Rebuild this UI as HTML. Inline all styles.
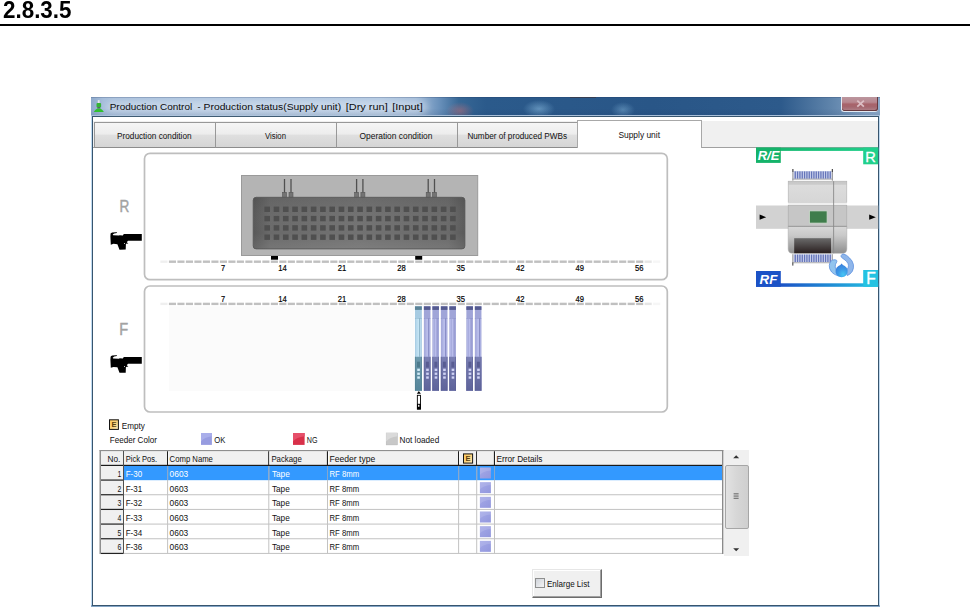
<!DOCTYPE html>
<html><head><meta charset="utf-8"><title>2.8.3.5</title>
<style>
html,body{margin:0;padding:0;background:#fff;}
body{width:970px;height:607px;position:relative;overflow:hidden;font-family:"Liberation Sans","DejaVu Sans",sans-serif;}
.abs{position:absolute;}
#hdr{left:3px;top:-1.8px;font-weight:bold;font-size:22.4px;color:#000;line-height:26px;transform:scaleY(1.04);transform-origin:0 50%;}
#rule{left:0;top:24.3px;width:970px;height:2px;background:#000;}
#tbar{left:91px;top:97px;width:789px;height:19px;background:
 radial-gradient(ellipse 14px 9px at 369px 14px,rgba(190,110,120,.55),rgba(190,110,120,0) 100%),
 radial-gradient(ellipse 16px 9px at 448px 12px,rgba(150,200,235,.5),rgba(150,200,235,0) 100%),
 radial-gradient(ellipse 12px 8px at 532px 13px,rgba(150,200,235,.4),rgba(150,200,235,0) 100%),
 linear-gradient(90deg,#8ea9cb 0px,#a6bedb 12px,#b0c6e0 110px,#b2c8e1 290px,#a3bcd9 325px,#6a91bb 348px,#376795 368px,#2b5a8b 395px,#295687 560px,#2d5a8b 690px,#5f84ab 740px,#86a4c6 775px,#8dabcb 789px);}
#tbar:after{content:"";position:absolute;left:0;top:0;width:100%;height:100%;background:linear-gradient(rgba(30,50,90,.35) 0,rgba(30,50,90,0) 1.5px,rgba(255,255,255,0) 60%,rgba(20,40,80,.12) 100%);}
.tab{position:absolute;top:122px;height:26px;box-sizing:border-box;border:1px solid #989898;border-bottom:1px solid #8c8c8c;background:linear-gradient(#f6f6f6,#ededed 45%,#dfdfdf 52%,#d5d5d5);}
.tab.sel{top:120px;height:28px;border-color:#a8a8a8;background:#fff;border-bottom:none;}
</style></head><body>
<div id="hdr" class="abs">2.8.3.5</div>
<div id="rule" class="abs"></div>
<div id="tbar" class="abs"></div>
<!-- window frame -->
<div class="abs" style="left:91px;top:115.2px;width:789px;height:491.8px;background:#bfdaf1"></div>
<div class="abs" style="left:91px;top:605px;width:789px;height:2px;background:#84a5c6"></div>
<div class="abs" style="left:91px;top:115.2px;width:789px;height:1px;background:#a9c0da"></div>
<div class="abs" style="left:92px;top:116px;width:787px;height:489.8px;background:#38556e"></div>
<div class="abs" style="left:93px;top:117px;width:785px;height:487.8px;background:#fff"></div>
<div class="abs" style="left:93px;top:120.5px;width:785px;height:27.5px;background:#f0f0f0;border-bottom:1px solid #a0a0a0;box-sizing:border-box"></div>
<div class="tab" style="left:94.0px;width:122.0px"></div>
<div class="tab" style="left:215.0px;width:122.0px"></div>
<div class="tab" style="left:336.0px;width:122.0px"></div>
<div class="tab" style="left:457.0px;width:121.0px"></div>
<div class="tab sel" style="left:577px;width:125px"></div>

<!-- scrollbar -->
<div class="abs" style="left:724px;top:450px;width:25px;height:105.6px;background:#f0f0f0"></div>
<div class="abs" style="left:724.6px;top:464.6px;width:24.2px;height:64.4px;box-sizing:border-box;border:1px solid #a6a6a6;border-radius:2px;background:linear-gradient(90deg,#e2e2e2,#d6d6d6 50%,#cfcfcf)"></div>
<!-- button -->
<div class="abs" style="left:532.2px;top:569px;width:69.8px;height:29px;box-sizing:border-box;background:#f0f0f0;border:1px solid;border-color:#e6e6e6 #6c6c6c #6c6c6c #e6e6e6;box-shadow:inset -1px -1px 0 #a0a0a0, inset 1px 1px 0 #fff"></div>
<div class="abs" style="left:535.1px;top:578.2px;width:9.6px;height:9.4px;box-sizing:border-box;border:1px solid #8e8f8f;background:linear-gradient(135deg,#cfd3da,#f4f4f4)"></div>
<svg class="abs" style="left:0;top:0" width="970" height="607" viewBox="0 0 970 607" font-family="Liberation Sans, sans-serif">
<defs>
<linearGradient id="gbody" x1="0" y1="0" x2="1" y2="0"><stop offset="0" stop-color="#585858"/><stop offset="0.08" stop-color="#6a6a6a"/><stop offset="0.5" stop-color="#727272"/><stop offset="0.92" stop-color="#6a6a6a"/><stop offset="1" stop-color="#5a5a5a"/></linearGradient>
<linearGradient id="gbodyv" x1="0" y1="0" x2="0" y2="1"><stop offset="0" stop-color="#000" stop-opacity="0.06"/><stop offset="0.7" stop-color="#fff" stop-opacity="0"/><stop offset="1" stop-color="#fff" stop-opacity="0.08"/></linearGradient>
<linearGradient id="gm1" x1="0" y1="0" x2="0" y2="1"><stop offset="0" stop-color="#c6c6c6"/><stop offset="0.14" stop-color="#cbcbcb"/><stop offset="0.2" stop-color="#dcdcdc"/><stop offset="1" stop-color="#d6d6d6"/></linearGradient>
<linearGradient id="gm2" x1="0" y1="0" x2="0" y2="1"><stop offset="0" stop-color="#d8d8d8"/><stop offset="0.35" stop-color="#c8c8c8"/><stop offset="1" stop-color="#8e8e8e"/></linearGradient>
<linearGradient id="gdk" x1="0" y1="0" x2="0" y2="1"><stop offset="0" stop-color="#6a6a6a"/><stop offset="1" stop-color="#2a2020"/></linearGradient>
<linearGradient id="ggr" x1="0" y1="0" x2="1" y2="0"><stop offset="0" stop-color="#14b36a"/><stop offset="1" stop-color="#20d08c"/></linearGradient>
<linearGradient id="gbl" x1="0" y1="0" x2="1" y2="0"><stop offset="0" stop-color="#1b52c6"/><stop offset="0.2" stop-color="#1b52c6"/><stop offset="1" stop-color="#24c2e2"/></linearGradient>
<radialGradient id="gper2" cx="0.62" cy="0.8" r="0.75"><stop offset="0" stop-color="#46c6f4"/><stop offset="0.55" stop-color="#3c98e6"/><stop offset="1" stop-color="#3a80dc"/></radialGradient>
</defs>
<linearGradient id="gE" x1="0" y1="0" x2="1" y2="1"><stop offset="0" stop-color="#fbc75c"/><stop offset="0.6" stop-color="#fcd684"/><stop offset="1" stop-color="#fdeec8"/></linearGradient>
<linearGradient id="gsw" x1="0" y1="0" x2="1" y2="1"><stop offset="0" stop-color="#a4a9e8"/><stop offset="1" stop-color="#9297dd"/></linearGradient>
<filter id="glow" x="-5%" y="-80%" width="110%" height="260%"><feGaussianBlur stdDeviation="3.2"/></filter>
<rect x="106" y="101" width="322" height="12" rx="6" fill="#fff" opacity="0.3" filter="url(#glow)"/>
<text y="109.9" font-size="9.6" fill="#0c0c0c"><tspan x="109.7" textLength="82.5" lengthAdjust="spacingAndGlyphs">Production Control</tspan> <tspan x="197.6" textLength="3.0" lengthAdjust="spacingAndGlyphs">-</tspan> <tspan x="203.6" textLength="137.5" lengthAdjust="spacingAndGlyphs">Production status(Supply unit)</tspan> <tspan x="345.8" textLength="41.9" lengthAdjust="spacingAndGlyphs">[Dry run]</tspan> <tspan x="392.2" textLength="30.5" lengthAdjust="spacingAndGlyphs">[Input]</tspan></text>
<text x="117.0" y="138.9" font-size="8.9" fill="#111" textLength="74.6" lengthAdjust="spacingAndGlyphs" >Production condition</text>
<text x="265.0" y="138.9" font-size="8.9" fill="#111" textLength="21.0" lengthAdjust="spacingAndGlyphs" >Vision</text>
<text x="359.6" y="138.9" font-size="8.9" fill="#111" textLength="72.8" lengthAdjust="spacingAndGlyphs" >Operation condition</text>
<text x="467.4" y="138.9" font-size="8.9" fill="#111" textLength="99.6" lengthAdjust="spacingAndGlyphs" >Number of produced PWBs</text>
<text x="618.4" y="138.3" font-size="8.9" fill="#111" textLength="41.6" lengthAdjust="spacingAndGlyphs" >Supply unit</text>
<rect x="144.5" y="153.3" width="522.8" height="126.4" rx="5.5" fill="#fff" stroke="#bebebe" stroke-width="1.7"/>
<rect x="144.5" y="286" width="522.8" height="126" rx="5.5" fill="#fff" stroke="#bebebe" stroke-width="1.7"/>
<rect x="241.5" y="175.5" width="236.2" height="80" fill="#b4b4b4" stroke="#9a9a9a" stroke-width="1"/>
<rect x="283.85" y="179" width="1.3" height="14" fill="#505050"/>
<rect x="282.5" y="192.3" width="4" height="5" fill="#747474" stroke="#585858" stroke-width="0.6"/>
<rect x="290.35" y="179" width="1.3" height="14" fill="#505050"/>
<rect x="289.0" y="192.3" width="4" height="5" fill="#747474" stroke="#585858" stroke-width="0.6"/>
<rect x="355.95" y="179" width="1.3" height="14" fill="#505050"/>
<rect x="354.6" y="192.3" width="4" height="5" fill="#747474" stroke="#585858" stroke-width="0.6"/>
<rect x="362.25" y="179" width="1.3" height="14" fill="#505050"/>
<rect x="360.9" y="192.3" width="4" height="5" fill="#747474" stroke="#585858" stroke-width="0.6"/>
<rect x="427.55" y="179" width="1.3" height="14" fill="#505050"/>
<rect x="426.2" y="192.3" width="4" height="5" fill="#747474" stroke="#585858" stroke-width="0.6"/>
<rect x="433.85" y="179" width="1.3" height="14" fill="#505050"/>
<rect x="432.5" y="192.3" width="4" height="5" fill="#747474" stroke="#585858" stroke-width="0.6"/>
<rect x="253.2" y="197.3" width="211.7" height="51.6" rx="3" fill="url(#gbody)" stroke="#545454" stroke-width="0.8"/>
<rect x="253.6" y="197.7" width="210.9" height="50.8" rx="3" fill="url(#gbodyv)"/>
<rect x="264.40" y="206.60" width="5.6" height="5.4" fill="#4f4f4f"/>
<rect x="273.69" y="206.60" width="5.6" height="5.4" fill="#4f4f4f"/>
<rect x="282.97" y="206.60" width="5.6" height="5.4" fill="#4f4f4f"/>
<rect x="292.25" y="206.60" width="5.6" height="5.4" fill="#4f4f4f"/>
<rect x="301.54" y="206.60" width="5.6" height="5.4" fill="#4f4f4f"/>
<rect x="310.82" y="206.60" width="5.6" height="5.4" fill="#4f4f4f"/>
<rect x="320.11" y="206.60" width="5.6" height="5.4" fill="#4f4f4f"/>
<rect x="329.39" y="206.60" width="5.6" height="5.4" fill="#4f4f4f"/>
<rect x="338.68" y="206.60" width="5.6" height="5.4" fill="#4f4f4f"/>
<rect x="347.96" y="206.60" width="5.6" height="5.4" fill="#4f4f4f"/>
<rect x="357.25" y="206.60" width="5.6" height="5.4" fill="#4f4f4f"/>
<rect x="366.53" y="206.60" width="5.6" height="5.4" fill="#4f4f4f"/>
<rect x="375.82" y="206.60" width="5.6" height="5.4" fill="#4f4f4f"/>
<rect x="385.10" y="206.60" width="5.6" height="5.4" fill="#4f4f4f"/>
<rect x="394.39" y="206.60" width="5.6" height="5.4" fill="#4f4f4f"/>
<rect x="403.67" y="206.60" width="5.6" height="5.4" fill="#4f4f4f"/>
<rect x="412.96" y="206.60" width="5.6" height="5.4" fill="#4f4f4f"/>
<rect x="422.25" y="206.60" width="5.6" height="5.4" fill="#4f4f4f"/>
<rect x="431.53" y="206.60" width="5.6" height="5.4" fill="#4f4f4f"/>
<rect x="440.81" y="206.60" width="5.6" height="5.4" fill="#4f4f4f"/>
<rect x="450.10" y="206.60" width="5.6" height="5.4" fill="#4f4f4f"/>
<rect x="264.40" y="215.90" width="5.6" height="5.4" fill="#4f4f4f"/>
<rect x="273.69" y="215.90" width="5.6" height="5.4" fill="#4f4f4f"/>
<rect x="282.97" y="215.90" width="5.6" height="5.4" fill="#4f4f4f"/>
<rect x="292.25" y="215.90" width="5.6" height="5.4" fill="#4f4f4f"/>
<rect x="301.54" y="215.90" width="5.6" height="5.4" fill="#4f4f4f"/>
<rect x="310.82" y="215.90" width="5.6" height="5.4" fill="#4f4f4f"/>
<rect x="320.11" y="215.90" width="5.6" height="5.4" fill="#4f4f4f"/>
<rect x="329.39" y="215.90" width="5.6" height="5.4" fill="#4f4f4f"/>
<rect x="338.68" y="215.90" width="5.6" height="5.4" fill="#4f4f4f"/>
<rect x="347.96" y="215.90" width="5.6" height="5.4" fill="#4f4f4f"/>
<rect x="357.25" y="215.90" width="5.6" height="5.4" fill="#4f4f4f"/>
<rect x="366.53" y="215.90" width="5.6" height="5.4" fill="#4f4f4f"/>
<rect x="375.82" y="215.90" width="5.6" height="5.4" fill="#4f4f4f"/>
<rect x="385.10" y="215.90" width="5.6" height="5.4" fill="#4f4f4f"/>
<rect x="394.39" y="215.90" width="5.6" height="5.4" fill="#4f4f4f"/>
<rect x="403.67" y="215.90" width="5.6" height="5.4" fill="#4f4f4f"/>
<rect x="412.96" y="215.90" width="5.6" height="5.4" fill="#4f4f4f"/>
<rect x="422.25" y="215.90" width="5.6" height="5.4" fill="#4f4f4f"/>
<rect x="431.53" y="215.90" width="5.6" height="5.4" fill="#4f4f4f"/>
<rect x="440.81" y="215.90" width="5.6" height="5.4" fill="#4f4f4f"/>
<rect x="450.10" y="215.90" width="5.6" height="5.4" fill="#4f4f4f"/>
<rect x="264.40" y="225.20" width="5.6" height="5.4" fill="#4f4f4f"/>
<rect x="273.69" y="225.20" width="5.6" height="5.4" fill="#4f4f4f"/>
<rect x="282.97" y="225.20" width="5.6" height="5.4" fill="#4f4f4f"/>
<rect x="292.25" y="225.20" width="5.6" height="5.4" fill="#4f4f4f"/>
<rect x="301.54" y="225.20" width="5.6" height="5.4" fill="#4f4f4f"/>
<rect x="310.82" y="225.20" width="5.6" height="5.4" fill="#4f4f4f"/>
<rect x="320.11" y="225.20" width="5.6" height="5.4" fill="#4f4f4f"/>
<rect x="329.39" y="225.20" width="5.6" height="5.4" fill="#4f4f4f"/>
<rect x="338.68" y="225.20" width="5.6" height="5.4" fill="#4f4f4f"/>
<rect x="347.96" y="225.20" width="5.6" height="5.4" fill="#4f4f4f"/>
<rect x="357.25" y="225.20" width="5.6" height="5.4" fill="#4f4f4f"/>
<rect x="366.53" y="225.20" width="5.6" height="5.4" fill="#4f4f4f"/>
<rect x="375.82" y="225.20" width="5.6" height="5.4" fill="#4f4f4f"/>
<rect x="385.10" y="225.20" width="5.6" height="5.4" fill="#4f4f4f"/>
<rect x="394.39" y="225.20" width="5.6" height="5.4" fill="#4f4f4f"/>
<rect x="403.67" y="225.20" width="5.6" height="5.4" fill="#4f4f4f"/>
<rect x="412.96" y="225.20" width="5.6" height="5.4" fill="#4f4f4f"/>
<rect x="422.25" y="225.20" width="5.6" height="5.4" fill="#4f4f4f"/>
<rect x="431.53" y="225.20" width="5.6" height="5.4" fill="#4f4f4f"/>
<rect x="440.81" y="225.20" width="5.6" height="5.4" fill="#4f4f4f"/>
<rect x="450.10" y="225.20" width="5.6" height="5.4" fill="#4f4f4f"/>
<rect x="264.40" y="234.50" width="5.6" height="5.4" fill="#4f4f4f"/>
<rect x="273.69" y="234.50" width="5.6" height="5.4" fill="#4f4f4f"/>
<rect x="282.97" y="234.50" width="5.6" height="5.4" fill="#4f4f4f"/>
<rect x="292.25" y="234.50" width="5.6" height="5.4" fill="#4f4f4f"/>
<rect x="301.54" y="234.50" width="5.6" height="5.4" fill="#4f4f4f"/>
<rect x="310.82" y="234.50" width="5.6" height="5.4" fill="#4f4f4f"/>
<rect x="320.11" y="234.50" width="5.6" height="5.4" fill="#4f4f4f"/>
<rect x="329.39" y="234.50" width="5.6" height="5.4" fill="#4f4f4f"/>
<rect x="338.68" y="234.50" width="5.6" height="5.4" fill="#4f4f4f"/>
<rect x="347.96" y="234.50" width="5.6" height="5.4" fill="#4f4f4f"/>
<rect x="357.25" y="234.50" width="5.6" height="5.4" fill="#4f4f4f"/>
<rect x="366.53" y="234.50" width="5.6" height="5.4" fill="#4f4f4f"/>
<rect x="375.82" y="234.50" width="5.6" height="5.4" fill="#4f4f4f"/>
<rect x="385.10" y="234.50" width="5.6" height="5.4" fill="#4f4f4f"/>
<rect x="394.39" y="234.50" width="5.6" height="5.4" fill="#4f4f4f"/>
<rect x="403.67" y="234.50" width="5.6" height="5.4" fill="#4f4f4f"/>
<rect x="412.96" y="234.50" width="5.6" height="5.4" fill="#4f4f4f"/>
<rect x="422.25" y="234.50" width="5.6" height="5.4" fill="#4f4f4f"/>
<rect x="431.53" y="234.50" width="5.6" height="5.4" fill="#4f4f4f"/>
<rect x="440.81" y="234.50" width="5.6" height="5.4" fill="#4f4f4f"/>
<rect x="450.10" y="234.50" width="5.6" height="5.4" fill="#4f4f4f"/>
<rect x="271" y="256" width="7" height="3.7" fill="#000"/>
<rect x="415.2" y="256" width="7" height="3.7" fill="#000"/>
<rect x="160.41" y="260.5" width="7.1" height="2.4" fill="#c0c0c0" opacity="0.25"/>
<rect x="168.90" y="260.5" width="7.1" height="2.4" fill="#c0c0c0" opacity="1.00"/>
<rect x="177.40" y="260.5" width="7.1" height="2.4" fill="#c0c0c0" opacity="1.00"/>
<rect x="185.89" y="260.5" width="7.1" height="2.4" fill="#c0c0c0" opacity="1.00"/>
<rect x="194.38" y="260.5" width="7.1" height="2.4" fill="#c0c0c0" opacity="1.00"/>
<rect x="202.88" y="260.5" width="7.1" height="2.4" fill="#c0c0c0" opacity="1.00"/>
<rect x="211.38" y="260.5" width="7.1" height="2.4" fill="#c0c0c0" opacity="1.00"/>
<rect x="219.87" y="260.5" width="7.1" height="2.4" fill="#c0c0c0" opacity="1.00"/>
<rect x="228.37" y="260.5" width="7.1" height="2.4" fill="#c0c0c0" opacity="1.00"/>
<rect x="236.86" y="260.5" width="7.1" height="2.4" fill="#c0c0c0" opacity="1.00"/>
<rect x="245.36" y="260.5" width="7.1" height="2.4" fill="#c0c0c0" opacity="1.00"/>
<rect x="253.85" y="260.5" width="7.1" height="2.4" fill="#c0c0c0" opacity="1.00"/>
<rect x="262.35" y="260.5" width="7.1" height="2.4" fill="#c0c0c0" opacity="1.00"/>
<rect x="270.84" y="260.5" width="7.1" height="2.4" fill="#c0c0c0" opacity="1.00"/>
<rect x="279.33" y="260.5" width="7.1" height="2.4" fill="#c0c0c0" opacity="1.00"/>
<rect x="287.83" y="260.5" width="7.1" height="2.4" fill="#c0c0c0" opacity="1.00"/>
<rect x="296.32" y="260.5" width="7.1" height="2.4" fill="#c0c0c0" opacity="1.00"/>
<rect x="304.82" y="260.5" width="7.1" height="2.4" fill="#c0c0c0" opacity="1.00"/>
<rect x="313.31" y="260.5" width="7.1" height="2.4" fill="#c0c0c0" opacity="1.00"/>
<rect x="321.81" y="260.5" width="7.1" height="2.4" fill="#c0c0c0" opacity="1.00"/>
<rect x="330.30" y="260.5" width="7.1" height="2.4" fill="#c0c0c0" opacity="1.00"/>
<rect x="338.80" y="260.5" width="7.1" height="2.4" fill="#c0c0c0" opacity="1.00"/>
<rect x="347.29" y="260.5" width="7.1" height="2.4" fill="#c0c0c0" opacity="1.00"/>
<rect x="355.79" y="260.5" width="7.1" height="2.4" fill="#c0c0c0" opacity="1.00"/>
<rect x="364.28" y="260.5" width="7.1" height="2.4" fill="#c0c0c0" opacity="1.00"/>
<rect x="372.78" y="260.5" width="7.1" height="2.4" fill="#c0c0c0" opacity="1.00"/>
<rect x="381.27" y="260.5" width="7.1" height="2.4" fill="#c0c0c0" opacity="1.00"/>
<rect x="389.77" y="260.5" width="7.1" height="2.4" fill="#c0c0c0" opacity="1.00"/>
<rect x="398.26" y="260.5" width="7.1" height="2.4" fill="#c0c0c0" opacity="1.00"/>
<rect x="406.76" y="260.5" width="7.1" height="2.4" fill="#c0c0c0" opacity="1.00"/>
<rect x="415.25" y="260.5" width="7.1" height="2.4" fill="#c0c0c0" opacity="1.00"/>
<rect x="423.75" y="260.5" width="7.1" height="2.4" fill="#c0c0c0" opacity="1.00"/>
<rect x="432.25" y="260.5" width="7.1" height="2.4" fill="#c0c0c0" opacity="1.00"/>
<rect x="440.74" y="260.5" width="7.1" height="2.4" fill="#c0c0c0" opacity="1.00"/>
<rect x="449.24" y="260.5" width="7.1" height="2.4" fill="#c0c0c0" opacity="1.00"/>
<rect x="457.73" y="260.5" width="7.1" height="2.4" fill="#c0c0c0" opacity="1.00"/>
<rect x="466.23" y="260.5" width="7.1" height="2.4" fill="#c0c0c0" opacity="1.00"/>
<rect x="474.72" y="260.5" width="7.1" height="2.4" fill="#c0c0c0" opacity="1.00"/>
<rect x="483.22" y="260.5" width="7.1" height="2.4" fill="#c0c0c0" opacity="1.00"/>
<rect x="491.71" y="260.5" width="7.1" height="2.4" fill="#c0c0c0" opacity="1.00"/>
<rect x="500.20" y="260.5" width="7.1" height="2.4" fill="#c0c0c0" opacity="1.00"/>
<rect x="508.70" y="260.5" width="7.1" height="2.4" fill="#c0c0c0" opacity="1.00"/>
<rect x="517.19" y="260.5" width="7.1" height="2.4" fill="#c0c0c0" opacity="1.00"/>
<rect x="525.69" y="260.5" width="7.1" height="2.4" fill="#c0c0c0" opacity="1.00"/>
<rect x="534.18" y="260.5" width="7.1" height="2.4" fill="#c0c0c0" opacity="1.00"/>
<rect x="542.68" y="260.5" width="7.1" height="2.4" fill="#c0c0c0" opacity="1.00"/>
<rect x="551.17" y="260.5" width="7.1" height="2.4" fill="#c0c0c0" opacity="1.00"/>
<rect x="559.67" y="260.5" width="7.1" height="2.4" fill="#c0c0c0" opacity="1.00"/>
<rect x="568.16" y="260.5" width="7.1" height="2.4" fill="#c0c0c0" opacity="1.00"/>
<rect x="576.66" y="260.5" width="7.1" height="2.4" fill="#c0c0c0" opacity="1.00"/>
<rect x="585.15" y="260.5" width="7.1" height="2.4" fill="#c0c0c0" opacity="1.00"/>
<rect x="593.65" y="260.5" width="7.1" height="2.4" fill="#c0c0c0" opacity="1.00"/>
<rect x="602.14" y="260.5" width="7.1" height="2.4" fill="#c0c0c0" opacity="1.00"/>
<rect x="610.64" y="260.5" width="7.1" height="2.4" fill="#c0c0c0" opacity="1.00"/>
<rect x="619.13" y="260.5" width="7.1" height="2.4" fill="#c0c0c0" opacity="1.00"/>
<rect x="627.63" y="260.5" width="7.1" height="2.4" fill="#c0c0c0" opacity="1.00"/>
<rect x="636.12" y="260.5" width="7.1" height="2.4" fill="#c0c0c0" opacity="1.00"/>
<rect x="644.62" y="260.5" width="7.1" height="2.4" fill="#c0c0c0" opacity="0.40"/>
<rect x="653.12" y="260.5" width="7.1" height="2.4" fill="#c0c0c0" opacity="0.15"/>
<text x="221.1" y="271.4" font-size="9.4" fill="#000" textLength="4.1" lengthAdjust="spacingAndGlyphs" stroke="#000" stroke-width="0.2">7</text>
<text x="278.3" y="271.4" font-size="9.4" fill="#000" textLength="8.5" lengthAdjust="spacingAndGlyphs" stroke="#000" stroke-width="0.2">14</text>
<text x="337.7" y="271.4" font-size="9.4" fill="#000" textLength="8.5" lengthAdjust="spacingAndGlyphs" stroke="#000" stroke-width="0.2">21</text>
<text x="397.2" y="271.4" font-size="9.4" fill="#000" textLength="8.5" lengthAdjust="spacingAndGlyphs" stroke="#000" stroke-width="0.2">28</text>
<text x="456.6" y="271.4" font-size="9.4" fill="#000" textLength="8.5" lengthAdjust="spacingAndGlyphs" stroke="#000" stroke-width="0.2">35</text>
<text x="516.0" y="271.4" font-size="9.4" fill="#000" textLength="8.5" lengthAdjust="spacingAndGlyphs" stroke="#000" stroke-width="0.2">42</text>
<text x="575.5" y="271.4" font-size="9.4" fill="#000" textLength="8.5" lengthAdjust="spacingAndGlyphs" stroke="#000" stroke-width="0.2">49</text>
<text x="634.9" y="271.4" font-size="9.4" fill="#000" textLength="8.5" lengthAdjust="spacingAndGlyphs" stroke="#000" stroke-width="0.2">56</text>
<rect x="160.41" y="302.7" width="7.1" height="2.4" fill="#c0c0c0" opacity="0.25"/>
<rect x="168.90" y="302.7" width="7.1" height="2.4" fill="#c0c0c0" opacity="1.00"/>
<rect x="177.40" y="302.7" width="7.1" height="2.4" fill="#c0c0c0" opacity="1.00"/>
<rect x="185.89" y="302.7" width="7.1" height="2.4" fill="#c0c0c0" opacity="1.00"/>
<rect x="194.38" y="302.7" width="7.1" height="2.4" fill="#c0c0c0" opacity="1.00"/>
<rect x="202.88" y="302.7" width="7.1" height="2.4" fill="#c0c0c0" opacity="1.00"/>
<rect x="211.38" y="302.7" width="7.1" height="2.4" fill="#c0c0c0" opacity="1.00"/>
<rect x="219.87" y="302.7" width="7.1" height="2.4" fill="#c0c0c0" opacity="1.00"/>
<rect x="228.37" y="302.7" width="7.1" height="2.4" fill="#c0c0c0" opacity="1.00"/>
<rect x="236.86" y="302.7" width="7.1" height="2.4" fill="#c0c0c0" opacity="1.00"/>
<rect x="245.36" y="302.7" width="7.1" height="2.4" fill="#c0c0c0" opacity="1.00"/>
<rect x="253.85" y="302.7" width="7.1" height="2.4" fill="#c0c0c0" opacity="1.00"/>
<rect x="262.35" y="302.7" width="7.1" height="2.4" fill="#c0c0c0" opacity="1.00"/>
<rect x="270.84" y="302.7" width="7.1" height="2.4" fill="#c0c0c0" opacity="1.00"/>
<rect x="279.33" y="302.7" width="7.1" height="2.4" fill="#c0c0c0" opacity="1.00"/>
<rect x="287.83" y="302.7" width="7.1" height="2.4" fill="#c0c0c0" opacity="1.00"/>
<rect x="296.32" y="302.7" width="7.1" height="2.4" fill="#c0c0c0" opacity="1.00"/>
<rect x="304.82" y="302.7" width="7.1" height="2.4" fill="#c0c0c0" opacity="1.00"/>
<rect x="313.31" y="302.7" width="7.1" height="2.4" fill="#c0c0c0" opacity="1.00"/>
<rect x="321.81" y="302.7" width="7.1" height="2.4" fill="#c0c0c0" opacity="1.00"/>
<rect x="330.30" y="302.7" width="7.1" height="2.4" fill="#c0c0c0" opacity="1.00"/>
<rect x="338.80" y="302.7" width="7.1" height="2.4" fill="#c0c0c0" opacity="1.00"/>
<rect x="347.29" y="302.7" width="7.1" height="2.4" fill="#c0c0c0" opacity="1.00"/>
<rect x="355.79" y="302.7" width="7.1" height="2.4" fill="#c0c0c0" opacity="1.00"/>
<rect x="364.28" y="302.7" width="7.1" height="2.4" fill="#c0c0c0" opacity="1.00"/>
<rect x="372.78" y="302.7" width="7.1" height="2.4" fill="#c0c0c0" opacity="1.00"/>
<rect x="381.27" y="302.7" width="7.1" height="2.4" fill="#c0c0c0" opacity="1.00"/>
<rect x="389.77" y="302.7" width="7.1" height="2.4" fill="#c0c0c0" opacity="1.00"/>
<rect x="398.26" y="302.7" width="7.1" height="2.4" fill="#c0c0c0" opacity="1.00"/>
<rect x="406.76" y="302.7" width="7.1" height="2.4" fill="#c0c0c0" opacity="1.00"/>
<rect x="415.25" y="302.7" width="7.1" height="2.4" fill="#c0c0c0" opacity="1.00"/>
<rect x="423.75" y="302.7" width="7.1" height="2.4" fill="#c0c0c0" opacity="1.00"/>
<rect x="432.25" y="302.7" width="7.1" height="2.4" fill="#c0c0c0" opacity="1.00"/>
<rect x="440.74" y="302.7" width="7.1" height="2.4" fill="#c0c0c0" opacity="1.00"/>
<rect x="449.24" y="302.7" width="7.1" height="2.4" fill="#c0c0c0" opacity="1.00"/>
<rect x="457.73" y="302.7" width="7.1" height="2.4" fill="#c0c0c0" opacity="1.00"/>
<rect x="466.23" y="302.7" width="7.1" height="2.4" fill="#c0c0c0" opacity="1.00"/>
<rect x="474.72" y="302.7" width="7.1" height="2.4" fill="#c0c0c0" opacity="1.00"/>
<rect x="483.22" y="302.7" width="7.1" height="2.4" fill="#c0c0c0" opacity="1.00"/>
<rect x="491.71" y="302.7" width="7.1" height="2.4" fill="#c0c0c0" opacity="1.00"/>
<rect x="500.20" y="302.7" width="7.1" height="2.4" fill="#c0c0c0" opacity="1.00"/>
<rect x="508.70" y="302.7" width="7.1" height="2.4" fill="#c0c0c0" opacity="1.00"/>
<rect x="517.19" y="302.7" width="7.1" height="2.4" fill="#c0c0c0" opacity="1.00"/>
<rect x="525.69" y="302.7" width="7.1" height="2.4" fill="#c0c0c0" opacity="1.00"/>
<rect x="534.18" y="302.7" width="7.1" height="2.4" fill="#c0c0c0" opacity="1.00"/>
<rect x="542.68" y="302.7" width="7.1" height="2.4" fill="#c0c0c0" opacity="1.00"/>
<rect x="551.17" y="302.7" width="7.1" height="2.4" fill="#c0c0c0" opacity="1.00"/>
<rect x="559.67" y="302.7" width="7.1" height="2.4" fill="#c0c0c0" opacity="1.00"/>
<rect x="568.16" y="302.7" width="7.1" height="2.4" fill="#c0c0c0" opacity="1.00"/>
<rect x="576.66" y="302.7" width="7.1" height="2.4" fill="#c0c0c0" opacity="1.00"/>
<rect x="585.15" y="302.7" width="7.1" height="2.4" fill="#c0c0c0" opacity="1.00"/>
<rect x="593.65" y="302.7" width="7.1" height="2.4" fill="#c0c0c0" opacity="1.00"/>
<rect x="602.14" y="302.7" width="7.1" height="2.4" fill="#c0c0c0" opacity="1.00"/>
<rect x="610.64" y="302.7" width="7.1" height="2.4" fill="#c0c0c0" opacity="1.00"/>
<rect x="619.13" y="302.7" width="7.1" height="2.4" fill="#c0c0c0" opacity="1.00"/>
<rect x="627.63" y="302.7" width="7.1" height="2.4" fill="#c0c0c0" opacity="1.00"/>
<rect x="636.12" y="302.7" width="7.1" height="2.4" fill="#c0c0c0" opacity="1.00"/>
<rect x="644.62" y="302.7" width="7.1" height="2.4" fill="#c0c0c0" opacity="0.40"/>
<rect x="653.12" y="302.7" width="7.1" height="2.4" fill="#c0c0c0" opacity="0.15"/>
<text x="221.1" y="301.9" font-size="9.4" fill="#000" textLength="4.1" lengthAdjust="spacingAndGlyphs" stroke="#000" stroke-width="0.2">7</text>
<text x="278.3" y="301.9" font-size="9.4" fill="#000" textLength="8.5" lengthAdjust="spacingAndGlyphs" stroke="#000" stroke-width="0.2">14</text>
<text x="337.7" y="301.9" font-size="9.4" fill="#000" textLength="8.5" lengthAdjust="spacingAndGlyphs" stroke="#000" stroke-width="0.2">21</text>
<text x="397.2" y="301.9" font-size="9.4" fill="#000" textLength="8.5" lengthAdjust="spacingAndGlyphs" stroke="#000" stroke-width="0.2">28</text>
<text x="456.6" y="301.9" font-size="9.4" fill="#000" textLength="8.5" lengthAdjust="spacingAndGlyphs" stroke="#000" stroke-width="0.2">35</text>
<text x="516.0" y="301.9" font-size="9.4" fill="#000" textLength="8.5" lengthAdjust="spacingAndGlyphs" stroke="#000" stroke-width="0.2">42</text>
<text x="575.5" y="301.9" font-size="9.4" fill="#000" textLength="8.5" lengthAdjust="spacingAndGlyphs" stroke="#000" stroke-width="0.2">49</text>
<text x="634.9" y="301.9" font-size="9.4" fill="#000" textLength="8.5" lengthAdjust="spacingAndGlyphs" stroke="#000" stroke-width="0.2">56</text>
<rect x="169" y="306.3" width="245" height="84.5" fill="#fbfbfb"/>
<linearGradient id="fg30" x1="0" y1="0" x2="0" y2="1"><stop offset="0" stop-color="#6e9bae"/><stop offset="1" stop-color="#55859a"/></linearGradient>
<rect x="414.95" y="306.3" width="6.9" height="84.5" fill="#a6cbe2"/>
<rect x="414.95" y="306.3" width="6.9" height="3.6" fill="#5a8397"/>
<rect x="415.85" y="318.3" width="5.10" height="38.5" fill="#c4e4f4"/>
<rect x="414.95" y="318" width="6.9" height="0.6" fill="#7fa9c0" opacity="0.7"/>
<rect x="419.25" y="318.3" width="0.9" height="38.5" fill="#7fa9c0"/>
<rect x="416.56" y="318.3" width="0.7" height="38.5" fill="#a6cbe2"/>
<rect x="414.95" y="356.8" width="6.9" height="34" fill="url(#fg30)"/>
<rect x="414.95" y="356.8" width="0.7" height="34" fill="#4d7a8c" opacity="0.7"/>
<rect x="421.15" y="356.8" width="0.7" height="34" fill="#4d7a8c" opacity="0.7"/>
<rect x="416.95" y="361.7" width="3" height="5.8" fill="#4d7a8c"/>
<rect x="417.25" y="368.7" width="2.6" height="2.3" fill="#d2ecf8"/>
<rect x="417.25" y="372.6" width="2.6" height="2.3" fill="#d2ecf8"/>
<rect x="417.25" y="376.4" width="2.6" height="2.3" fill="#d2ecf8"/>
<linearGradient id="fg31" x1="0" y1="0" x2="0" y2="1"><stop offset="0" stop-color="#7b80b4"/><stop offset="1" stop-color="#5e639a"/></linearGradient>
<rect x="423.87" y="306.3" width="6.6" height="84.5" fill="#a0a5d8"/>
<rect x="423.87" y="306.3" width="6.6" height="3.6" fill="#545a90"/>
<rect x="424.77" y="318.3" width="4.80" height="38.5" fill="#b9bdea"/>
<rect x="423.87" y="318" width="6.6" height="0.6" fill="#8287c2" opacity="0.7"/>
<rect x="428.17" y="318.3" width="0.9" height="38.5" fill="#8287c2"/>
<rect x="425.47" y="318.3" width="0.7" height="38.5" fill="#a0a5d8"/>
<rect x="423.87" y="356.8" width="6.6" height="34" fill="url(#fg31)"/>
<rect x="423.87" y="356.8" width="0.7" height="34" fill="#585c92" opacity="0.7"/>
<rect x="429.77" y="356.8" width="0.7" height="34" fill="#585c92" opacity="0.7"/>
<rect x="425.87" y="361.7" width="3" height="5.8" fill="#585c92"/>
<rect x="426.17" y="368.7" width="2.6" height="2.3" fill="#cfd2f4"/>
<rect x="426.17" y="372.6" width="2.6" height="2.3" fill="#cfd2f4"/>
<rect x="426.17" y="376.4" width="2.6" height="2.3" fill="#cfd2f4"/>
<linearGradient id="fg32" x1="0" y1="0" x2="0" y2="1"><stop offset="0" stop-color="#7b80b4"/><stop offset="1" stop-color="#5e639a"/></linearGradient>
<rect x="432.37" y="306.3" width="6.6" height="84.5" fill="#a0a5d8"/>
<rect x="432.37" y="306.3" width="6.6" height="3.6" fill="#545a90"/>
<rect x="433.26" y="318.3" width="4.80" height="38.5" fill="#b9bdea"/>
<rect x="432.37" y="318" width="6.6" height="0.6" fill="#8287c2" opacity="0.7"/>
<rect x="436.67" y="318.3" width="0.9" height="38.5" fill="#8287c2"/>
<rect x="433.97" y="318.3" width="0.7" height="38.5" fill="#a0a5d8"/>
<rect x="432.37" y="356.8" width="6.6" height="34" fill="url(#fg32)"/>
<rect x="432.37" y="356.8" width="0.7" height="34" fill="#585c92" opacity="0.7"/>
<rect x="438.27" y="356.8" width="0.7" height="34" fill="#585c92" opacity="0.7"/>
<rect x="434.37" y="361.7" width="3" height="5.8" fill="#585c92"/>
<rect x="434.67" y="368.7" width="2.6" height="2.3" fill="#cfd2f4"/>
<rect x="434.67" y="372.6" width="2.6" height="2.3" fill="#cfd2f4"/>
<rect x="434.67" y="376.4" width="2.6" height="2.3" fill="#cfd2f4"/>
<linearGradient id="fg33" x1="0" y1="0" x2="0" y2="1"><stop offset="0" stop-color="#7b80b4"/><stop offset="1" stop-color="#5e639a"/></linearGradient>
<rect x="440.86" y="306.3" width="6.6" height="84.5" fill="#a0a5d8"/>
<rect x="440.86" y="306.3" width="6.6" height="3.6" fill="#545a90"/>
<rect x="441.76" y="318.3" width="4.80" height="38.5" fill="#b9bdea"/>
<rect x="440.86" y="318" width="6.6" height="0.6" fill="#8287c2" opacity="0.7"/>
<rect x="445.16" y="318.3" width="0.9" height="38.5" fill="#8287c2"/>
<rect x="442.46" y="318.3" width="0.7" height="38.5" fill="#a0a5d8"/>
<rect x="440.86" y="356.8" width="6.6" height="34" fill="url(#fg33)"/>
<rect x="440.86" y="356.8" width="0.7" height="34" fill="#585c92" opacity="0.7"/>
<rect x="446.76" y="356.8" width="0.7" height="34" fill="#585c92" opacity="0.7"/>
<rect x="442.86" y="361.7" width="3" height="5.8" fill="#585c92"/>
<rect x="443.16" y="368.7" width="2.6" height="2.3" fill="#cfd2f4"/>
<rect x="443.16" y="372.6" width="2.6" height="2.3" fill="#cfd2f4"/>
<rect x="443.16" y="376.4" width="2.6" height="2.3" fill="#cfd2f4"/>
<linearGradient id="fg34" x1="0" y1="0" x2="0" y2="1"><stop offset="0" stop-color="#7b80b4"/><stop offset="1" stop-color="#5e639a"/></linearGradient>
<rect x="449.36" y="306.3" width="6.6" height="84.5" fill="#a0a5d8"/>
<rect x="449.36" y="306.3" width="6.6" height="3.6" fill="#545a90"/>
<rect x="450.25" y="318.3" width="4.80" height="38.5" fill="#b9bdea"/>
<rect x="449.36" y="318" width="6.6" height="0.6" fill="#8287c2" opacity="0.7"/>
<rect x="453.66" y="318.3" width="0.9" height="38.5" fill="#8287c2"/>
<rect x="450.96" y="318.3" width="0.7" height="38.5" fill="#a0a5d8"/>
<rect x="449.36" y="356.8" width="6.6" height="34" fill="url(#fg34)"/>
<rect x="449.36" y="356.8" width="0.7" height="34" fill="#585c92" opacity="0.7"/>
<rect x="455.26" y="356.8" width="0.7" height="34" fill="#585c92" opacity="0.7"/>
<rect x="451.36" y="361.7" width="3" height="5.8" fill="#585c92"/>
<rect x="451.66" y="368.7" width="2.6" height="2.3" fill="#cfd2f4"/>
<rect x="451.66" y="372.6" width="2.6" height="2.3" fill="#cfd2f4"/>
<rect x="451.66" y="376.4" width="2.6" height="2.3" fill="#cfd2f4"/>
<linearGradient id="fg36" x1="0" y1="0" x2="0" y2="1"><stop offset="0" stop-color="#7b80b4"/><stop offset="1" stop-color="#5e639a"/></linearGradient>
<rect x="466.35" y="306.3" width="6.6" height="84.5" fill="#a0a5d8"/>
<rect x="466.35" y="306.3" width="6.6" height="3.6" fill="#545a90"/>
<rect x="467.25" y="318.3" width="4.80" height="38.5" fill="#b9bdea"/>
<rect x="466.35" y="318" width="6.6" height="0.6" fill="#8287c2" opacity="0.7"/>
<rect x="470.65" y="318.3" width="0.9" height="38.5" fill="#8287c2"/>
<rect x="467.95" y="318.3" width="0.7" height="38.5" fill="#a0a5d8"/>
<rect x="466.35" y="356.8" width="6.6" height="34" fill="url(#fg36)"/>
<rect x="466.35" y="356.8" width="0.7" height="34" fill="#585c92" opacity="0.7"/>
<rect x="472.25" y="356.8" width="0.7" height="34" fill="#585c92" opacity="0.7"/>
<rect x="468.35" y="361.7" width="3" height="5.8" fill="#585c92"/>
<rect x="468.65" y="368.7" width="2.6" height="2.3" fill="#cfd2f4"/>
<rect x="468.65" y="372.6" width="2.6" height="2.3" fill="#cfd2f4"/>
<rect x="468.65" y="376.4" width="2.6" height="2.3" fill="#cfd2f4"/>
<linearGradient id="fg37" x1="0" y1="0" x2="0" y2="1"><stop offset="0" stop-color="#7b80b4"/><stop offset="1" stop-color="#5e639a"/></linearGradient>
<rect x="474.84" y="306.3" width="6.6" height="84.5" fill="#a0a5d8"/>
<rect x="474.84" y="306.3" width="6.6" height="3.6" fill="#545a90"/>
<rect x="475.74" y="318.3" width="4.80" height="38.5" fill="#b9bdea"/>
<rect x="474.84" y="318" width="6.6" height="0.6" fill="#8287c2" opacity="0.7"/>
<rect x="479.14" y="318.3" width="0.9" height="38.5" fill="#8287c2"/>
<rect x="476.44" y="318.3" width="0.7" height="38.5" fill="#a0a5d8"/>
<rect x="474.84" y="356.8" width="6.6" height="34" fill="url(#fg37)"/>
<rect x="474.84" y="356.8" width="0.7" height="34" fill="#585c92" opacity="0.7"/>
<rect x="480.74" y="356.8" width="0.7" height="34" fill="#585c92" opacity="0.7"/>
<rect x="476.84" y="361.7" width="3" height="5.8" fill="#585c92"/>
<rect x="477.14" y="368.7" width="2.6" height="2.3" fill="#cfd2f4"/>
<rect x="477.14" y="372.6" width="2.6" height="2.3" fill="#cfd2f4"/>
<rect x="477.14" y="376.4" width="2.6" height="2.3" fill="#cfd2f4"/>
<path d="M418.85 391.1 L420.9 393.8 L416.8 393.8 Z" fill="#000"/>
<rect x="417.35" y="395.3" width="3.1" height="13.8" fill="#fff" stroke="#000" stroke-width="0.9"/>
<rect x="417" y="403.8" width="3.8" height="5.6" fill="#000"/>
<rect x="418.1" y="404.8" width="1.3" height="2" fill="#fff"/>
<path transform="translate(0,0)" d="M110.4 236.6 L110.6 233.6 Q111.4 232.0 117.1 232.2 L116.8 232.9 Q113.6 233.0 112.7 234.6 L113.2 235.3 L118.8 235.6 L119.8 235.2 L122.8 235.4 L123.8 233.9 L141.8 233.9 L141.8 240.7 L128 240.7 L126.8 242.2 L128.4 243.4 L125.9 243.8 L125.7 249.6 L119.5 249.7 L117.4 244.2 L113.5 243.8 L110.8 244.7 Z" fill="#000"/><circle cx="124.5" cy="243.5" r="0.5" fill="#fff"/>
<path transform="translate(0,123.1)" d="M110.4 236.6 L110.6 233.6 Q111.4 232.0 117.1 232.2 L116.8 232.9 Q113.6 233.0 112.7 234.6 L113.2 235.3 L118.8 235.6 L119.8 235.2 L122.8 235.4 L123.8 233.9 L141.8 233.9 L141.8 240.7 L128 240.7 L126.8 242.2 L128.4 243.4 L125.9 243.8 L125.7 249.6 L119.5 249.7 L117.4 244.2 L113.5 243.8 L110.8 244.7 Z" fill="#000"/><circle cx="124.5" cy="366.6" r="0.5" fill="#fff"/>
<text transform="translate(119.6,212.2) scale(0.82,1)" font-size="16.6" fill="#a2a2a2" stroke="#a2a2a2" stroke-width="0.45">R</text>
<text transform="translate(119.2,335) scale(0.88,1)" font-size="16.6" fill="#a2a2a2" stroke="#a2a2a2" stroke-width="0.45">F</text>
<rect x="756" y="205.5" width="122.2" height="23.3" fill="#d2d2d2"/>
<rect x="793.4" y="171.0" width="38.4" height="8.2" fill="#cfd6ee"/>
<rect x="794.60" y="171.4" width="1.3" height="7.3" fill="#6474b8"/>
<rect x="796.93" y="171.4" width="1.3" height="7.3" fill="#6474b8"/>
<rect x="799.27" y="171.4" width="1.3" height="7.3" fill="#6474b8"/>
<rect x="801.60" y="171.4" width="1.3" height="7.3" fill="#6474b8"/>
<rect x="803.93" y="171.4" width="1.3" height="7.3" fill="#6474b8"/>
<rect x="806.27" y="171.4" width="1.3" height="7.3" fill="#6474b8"/>
<rect x="808.60" y="171.4" width="1.3" height="7.3" fill="#6474b8"/>
<rect x="810.93" y="171.4" width="1.3" height="7.3" fill="#6474b8"/>
<rect x="813.27" y="171.4" width="1.3" height="7.3" fill="#6474b8"/>
<rect x="815.60" y="171.4" width="1.3" height="7.3" fill="#6474b8"/>
<rect x="817.93" y="171.4" width="1.3" height="7.3" fill="#6474b8"/>
<rect x="820.27" y="171.4" width="1.3" height="7.3" fill="#6474b8"/>
<rect x="822.60" y="171.4" width="1.3" height="7.3" fill="#6474b8"/>
<rect x="824.93" y="171.4" width="1.3" height="7.3" fill="#6474b8"/>
<rect x="827.27" y="171.4" width="1.3" height="7.3" fill="#6474b8"/>
<rect x="829.60" y="171.4" width="1.3" height="7.3" fill="#6474b8"/>
<rect x="792.4" y="169.0" width="1" height="3" fill="#222"/>
<rect x="831.8" y="169.0" width="1" height="3" fill="#222"/>
<rect x="792.5" y="172.0" width="0.8" height="8.7" fill="#777"/>
<rect x="831.9" y="172.0" width="0.8" height="8.7" fill="#777"/>
<rect x="792.4" y="178.7" width="40.4" height="0.8" fill="#999"/>
<rect x="788.2" y="181.2" width="58.6" height="21.4" fill="url(#gm1)" stroke="#b0b0b0" stroke-width="0.6"/>
<rect x="788.2" y="202.6" width="58.6" height="3" fill="#efefef"/>
<rect x="788.2" y="205.5" width="58.6" height="20.7" fill="#c6c6c6" stroke="#aaa" stroke-width="0.6"/>
<path d="M788.2 226.4 H846.8 V249 Q846.8 253.2 842.5 253.2 H792.5 Q788.2 253.2 788.2 249 Z" fill="url(#gm2)" stroke="#a4a4a4" stroke-width="0.5"/>
<rect x="788.2" y="225.9" width="58.6" height="0.9" fill="#9a9a9a"/>
<rect x="794.2" y="238.2" width="36.8" height="15" fill="url(#gdk)"/>
<rect x="833.2" y="181.2" width="0.9" height="72" fill="#8a8a8a"/>
<rect x="809.4" y="210.9" width="17.7" height="12.2" fill="#3f7d4b" stroke="#cfdccf" stroke-width="0.8"/>
<path d="M759.6 214.6 L766.2 217.2 L759.6 219.8 Z" fill="#000"/>
<path d="M869.2 214.6 L875.8 217.2 L869.2 219.8 Z" fill="#000"/>
<rect x="793.4" y="254.2" width="38.4" height="8.1" fill="#cfd6ee"/>
<rect x="794.60" y="254.6" width="1.3" height="7.4" fill="#6474b8"/>
<rect x="796.93" y="254.6" width="1.3" height="7.4" fill="#6474b8"/>
<rect x="799.27" y="254.6" width="1.3" height="7.4" fill="#6474b8"/>
<rect x="801.60" y="254.6" width="1.3" height="7.4" fill="#6474b8"/>
<rect x="803.93" y="254.6" width="1.3" height="7.4" fill="#6474b8"/>
<rect x="806.27" y="254.6" width="1.3" height="7.4" fill="#6474b8"/>
<rect x="808.60" y="254.6" width="1.3" height="7.4" fill="#6474b8"/>
<rect x="810.93" y="254.6" width="1.3" height="7.4" fill="#6474b8"/>
<rect x="813.27" y="254.6" width="1.3" height="7.4" fill="#6474b8"/>
<rect x="815.60" y="254.6" width="1.3" height="7.4" fill="#6474b8"/>
<rect x="817.93" y="254.6" width="1.3" height="7.4" fill="#6474b8"/>
<rect x="820.27" y="254.6" width="1.3" height="7.4" fill="#6474b8"/>
<rect x="822.60" y="254.6" width="1.3" height="7.4" fill="#6474b8"/>
<rect x="824.93" y="254.6" width="1.3" height="7.4" fill="#6474b8"/>
<rect x="827.27" y="254.6" width="1.3" height="7.4" fill="#6474b8"/>
<rect x="829.60" y="254.6" width="1.3" height="7.4" fill="#6474b8"/>
<rect x="792.4" y="254.2" width="0.9" height="9.1" fill="#888"/>
<rect x="792.4" y="262.4" width="0.9" height="3.2" fill="#222"/>
<rect x="831.9" y="254.2" width="0.9" height="8.6" fill="#999"/>
<rect x="792.4" y="262.4" width="40.4" height="0.8" fill="#999"/>
<g stroke="#4f86dc" stroke-width="0.7" stroke-linejoin="round">
<path d="M830.6 261.6 Q832 259.4 835 259.7 Q837.4 260 836.9 261.6 Q835 264.5 835.2 267 Q835.6 269 836.6 270.2 L838.5 276 Q834 274.8 831.6 272 Q829 268.8 829.3 265.6 Q829.5 263.2 830.6 261.6 Z" fill="#92c4ee"/>
<path d="M841.2 255.4 Q842 253.8 843.6 254 Q847 255 849.4 257.8 Q852.6 260.8 853.4 264.4 Q854 268 852.4 271.2 Q850.8 274 847.4 275.6 L845.6 271 Q847.4 269.6 848.2 267.4 Q848.8 265.4 848 263.6 Q846.8 261.4 845 260 Q842.6 258.4 841.4 257.2 Q840.8 256.4 841.2 255.4 Z" fill="#8fb6ea"/>
</g>
<path d="M841.6 263.6 Q842.6 265.2 844.8 266 A6.1 6.1 0 1 1 838.4 266 Q840.6 265.2 841.6 263.6 Z" fill="url(#gper2)"/>
<rect x="756" y="147.6" width="122.2" height="3.3" fill="url(#ggr)"/>
<rect x="756" y="147.6" width="24.8" height="15.3" fill="#14b36a"/>
<rect x="863.2" y="147.6" width="15" height="16.7" fill="#20d08c"/>
<text x="757.7" y="160.4" textLength="21.7" lengthAdjust="spacingAndGlyphs" font-size="12.7" font-weight="bold" font-style="italic" fill="#fff">R/E</text>
<text x="870.6" y="161.8" text-anchor="middle" font-size="14.6" fill="#fff" stroke="#fff" stroke-width="0.3">R</text>
<rect x="756" y="283.3" width="122.2" height="3.5" fill="url(#gbl)"/>
<rect x="756" y="271" width="24.8" height="15.8" fill="#1b52c6"/>
<rect x="863.2" y="270" width="15" height="16.8" fill="#24c2e2"/>
<text x="759.6" y="283.6" textLength="17.8" lengthAdjust="spacingAndGlyphs" font-size="12.7" font-weight="bold" font-style="italic" fill="#fff">RF</text>
<text x="870.9" y="283.9" text-anchor="middle" font-size="15.6" fill="#fff" stroke="#fff" stroke-width="0.3">F</text>
<rect x="100.3" y="450.6" width="622.3000000000001" height="14.80" fill="#f0f0f0"/>
<rect x="100.3" y="465.4" width="23.200000000000003" height="88.02" fill="#f0f0f0"/>
<rect x="124.0" y="466.0" width="598.6" height="14.17" fill="#3399ff"/>
<rect x="123.5" y="494.24" width="599.1" height="1" fill="#c2c2c2"/>
<rect x="123.5" y="508.91" width="599.1" height="1" fill="#c2c2c2"/>
<rect x="123.5" y="523.58" width="599.1" height="1" fill="#c2c2c2"/>
<rect x="123.5" y="538.25" width="599.1" height="1" fill="#c2c2c2"/>
<rect x="123.5" y="552.92" width="599.1" height="1" fill="#c2c2c2"/>
<rect x="167.10" y="465.4" width="1" height="88.02" fill="#c2c2c2"/>
<rect x="167.10" y="465.4" width="1" height="14.67" fill="#86a6cc"/>
<rect x="167.00" y="451.2" width="1.1" height="14.20" fill="#1c1c1c"/>
<rect x="168.20" y="451.4" width="0.8" height="13.40" fill="#fff"/>
<rect x="268.30" y="465.4" width="1" height="88.02" fill="#c2c2c2"/>
<rect x="268.30" y="465.4" width="1" height="14.67" fill="#86a6cc"/>
<rect x="268.20" y="451.2" width="1.1" height="14.20" fill="#1c1c1c"/>
<rect x="269.40" y="451.4" width="0.8" height="13.40" fill="#fff"/>
<rect x="327.00" y="465.4" width="1" height="88.02" fill="#c2c2c2"/>
<rect x="327.00" y="465.4" width="1" height="14.67" fill="#86a6cc"/>
<rect x="326.90" y="451.2" width="1.1" height="14.20" fill="#1c1c1c"/>
<rect x="328.10" y="451.4" width="0.8" height="13.40" fill="#fff"/>
<rect x="458.10" y="465.4" width="1" height="88.02" fill="#c2c2c2"/>
<rect x="458.10" y="465.4" width="1" height="14.67" fill="#86a6cc"/>
<rect x="458.00" y="451.2" width="1.1" height="14.20" fill="#1c1c1c"/>
<rect x="459.20" y="451.4" width="0.8" height="13.40" fill="#fff"/>
<rect x="476.20" y="465.4" width="1" height="88.02" fill="#c2c2c2"/>
<rect x="476.20" y="465.4" width="1" height="14.67" fill="#86a6cc"/>
<rect x="476.10" y="451.2" width="1.1" height="14.20" fill="#1c1c1c"/>
<rect x="477.30" y="451.4" width="0.8" height="13.40" fill="#fff"/>
<rect x="494.00" y="465.4" width="1" height="88.02" fill="#c2c2c2"/>
<rect x="494.00" y="465.4" width="1" height="14.67" fill="#86a6cc"/>
<rect x="493.90" y="451.2" width="1.1" height="14.20" fill="#1c1c1c"/>
<rect x="495.10" y="451.4" width="0.8" height="13.40" fill="#fff"/>
<rect x="99.6" y="450" width="623.7" height="1.1" fill="#8e8e8e"/>
<rect x="100.3" y="464.80" width="622.3000000000001" height="1.2" fill="#1a1a1a"/>
<rect x="100.3" y="479.47" width="23.200000000000003" height="1.2" fill="#222"/>
<rect x="100.3" y="494.14" width="23.200000000000003" height="1.2" fill="#222"/>
<rect x="100.3" y="508.81" width="23.200000000000003" height="1.2" fill="#222"/>
<rect x="100.3" y="523.48" width="23.200000000000003" height="1.2" fill="#222"/>
<rect x="100.3" y="538.15" width="23.200000000000003" height="1.2" fill="#222"/>
<rect x="100.3" y="552.82" width="23.200000000000003" height="1.2" fill="#222"/>
<rect x="123.00" y="451" width="1" height="102.42" fill="#505050"/>
<rect x="99.50" y="450" width="1.5" height="104.02" fill="#8e8e8e"/>
<rect x="722.00" y="450" width="1.4" height="104.02" fill="#8a8a8a"/>
<text x="107.5" y="461.8" font-size="8.4" fill="#111" textLength="12.8" lengthAdjust="spacingAndGlyphs" >No.</text>
<text x="125.7" y="461.8" font-size="8.4" fill="#111" textLength="31.4" lengthAdjust="spacingAndGlyphs" >Pick Pos.</text>
<text x="169.6" y="461.8" font-size="8.4" fill="#111" textLength="43.3" lengthAdjust="spacingAndGlyphs" >Comp Name</text>
<text x="271.4" y="461.8" font-size="8.4" fill="#111" textLength="30.4" lengthAdjust="spacingAndGlyphs" >Package</text>
<text x="329.5" y="461.8" font-size="8.4" fill="#111" textLength="45.8" lengthAdjust="spacingAndGlyphs" >Feeder type</text>
<text x="496.5" y="461.8" font-size="8.4" fill="#111" textLength="45.9" lengthAdjust="spacingAndGlyphs" >Error Details</text>
<text x="117.4" y="476.9" font-size="8.4" fill="#111" textLength="3.8" lengthAdjust="spacingAndGlyphs" >1</text>
<text x="125.7" y="476.9" font-size="8.4" fill="#fff" textLength="16.5" lengthAdjust="spacingAndGlyphs" >F-30</text>
<text x="169.6" y="476.9" font-size="8.4" fill="#fff" textLength="18.6" lengthAdjust="spacingAndGlyphs" >0603</text>
<text x="271.9" y="476.9" font-size="8.4" fill="#fff" textLength="17.9" lengthAdjust="spacingAndGlyphs" >Tape</text>
<text x="329.5" y="476.9" font-size="8.4" fill="#fff" textLength="29.7" lengthAdjust="spacingAndGlyphs" >RF 8mm</text>
<rect x="479.9" y="467.50" width="11" height="11" fill="url(#gsw)"/>
<path d="M479.9 474.90 Q482.7 470.90 490.9 470.40 L490.9 467.50 L479.9 467.50 Z" fill="#fff" opacity="0.13"/>
<text x="117.4" y="491.6" font-size="8.4" fill="#111" textLength="3.8" lengthAdjust="spacingAndGlyphs" >2</text>
<text x="125.7" y="491.6" font-size="8.4" fill="#111" textLength="16.5" lengthAdjust="spacingAndGlyphs" >F-31</text>
<text x="169.6" y="491.6" font-size="8.4" fill="#111" textLength="18.6" lengthAdjust="spacingAndGlyphs" >0603</text>
<text x="271.9" y="491.6" font-size="8.4" fill="#111" textLength="17.9" lengthAdjust="spacingAndGlyphs" >Tape</text>
<text x="329.5" y="491.6" font-size="8.4" fill="#111" textLength="29.7" lengthAdjust="spacingAndGlyphs" >RF 8mm</text>
<rect x="479.9" y="482.17" width="11" height="11" fill="url(#gsw)"/>
<path d="M479.9 489.57 Q482.7 485.57 490.9 485.07 L490.9 482.17 L479.9 482.17 Z" fill="#fff" opacity="0.13"/>
<text x="117.4" y="506.2" font-size="8.4" fill="#111" textLength="3.8" lengthAdjust="spacingAndGlyphs" >3</text>
<text x="125.7" y="506.2" font-size="8.4" fill="#111" textLength="16.5" lengthAdjust="spacingAndGlyphs" >F-32</text>
<text x="169.6" y="506.2" font-size="8.4" fill="#111" textLength="18.6" lengthAdjust="spacingAndGlyphs" >0603</text>
<text x="271.9" y="506.2" font-size="8.4" fill="#111" textLength="17.9" lengthAdjust="spacingAndGlyphs" >Tape</text>
<text x="329.5" y="506.2" font-size="8.4" fill="#111" textLength="29.7" lengthAdjust="spacingAndGlyphs" >RF 8mm</text>
<rect x="479.9" y="496.84" width="11" height="11" fill="url(#gsw)"/>
<path d="M479.9 504.24 Q482.7 500.24 490.9 499.74 L490.9 496.84 L479.9 496.84 Z" fill="#fff" opacity="0.13"/>
<text x="117.4" y="520.9" font-size="8.4" fill="#111" textLength="3.8" lengthAdjust="spacingAndGlyphs" >4</text>
<text x="125.7" y="520.9" font-size="8.4" fill="#111" textLength="16.5" lengthAdjust="spacingAndGlyphs" >F-33</text>
<text x="169.6" y="520.9" font-size="8.4" fill="#111" textLength="18.6" lengthAdjust="spacingAndGlyphs" >0603</text>
<text x="271.9" y="520.9" font-size="8.4" fill="#111" textLength="17.9" lengthAdjust="spacingAndGlyphs" >Tape</text>
<text x="329.5" y="520.9" font-size="8.4" fill="#111" textLength="29.7" lengthAdjust="spacingAndGlyphs" >RF 8mm</text>
<rect x="479.9" y="511.51" width="11" height="11" fill="url(#gsw)"/>
<path d="M479.9 518.91 Q482.7 514.91 490.9 514.41 L490.9 511.51 L479.9 511.51 Z" fill="#fff" opacity="0.13"/>
<text x="117.4" y="535.6" font-size="8.4" fill="#111" textLength="3.8" lengthAdjust="spacingAndGlyphs" >5</text>
<text x="125.7" y="535.6" font-size="8.4" fill="#111" textLength="16.5" lengthAdjust="spacingAndGlyphs" >F-34</text>
<text x="169.6" y="535.6" font-size="8.4" fill="#111" textLength="18.6" lengthAdjust="spacingAndGlyphs" >0603</text>
<text x="271.9" y="535.6" font-size="8.4" fill="#111" textLength="17.9" lengthAdjust="spacingAndGlyphs" >Tape</text>
<text x="329.5" y="535.6" font-size="8.4" fill="#111" textLength="29.7" lengthAdjust="spacingAndGlyphs" >RF 8mm</text>
<rect x="479.9" y="526.18" width="11" height="11" fill="url(#gsw)"/>
<path d="M479.9 533.58 Q482.7 529.58 490.9 529.08 L490.9 526.18 L479.9 526.18 Z" fill="#fff" opacity="0.13"/>
<text x="117.4" y="550.2" font-size="8.4" fill="#111" textLength="3.8" lengthAdjust="spacingAndGlyphs" >6</text>
<text x="125.7" y="550.2" font-size="8.4" fill="#111" textLength="16.5" lengthAdjust="spacingAndGlyphs" >F-36</text>
<text x="169.6" y="550.2" font-size="8.4" fill="#111" textLength="18.6" lengthAdjust="spacingAndGlyphs" >0603</text>
<text x="271.9" y="550.2" font-size="8.4" fill="#111" textLength="17.9" lengthAdjust="spacingAndGlyphs" >Tape</text>
<text x="329.5" y="550.2" font-size="8.4" fill="#111" textLength="29.7" lengthAdjust="spacingAndGlyphs" >RF 8mm</text>
<rect x="479.9" y="540.85" width="11" height="11" fill="url(#gsw)"/>
<path d="M479.9 548.25 Q482.7 544.25 490.9 543.75 L490.9 540.85 L479.9 540.85 Z" fill="#fff" opacity="0.13"/>
<rect x="109.5" y="419.8" width="8.9" height="9.6" fill="url(#gE)" stroke="#141414" stroke-width="1"/>
<text x="114" y="427.4" font-size="7.6" font-weight="bold" text-anchor="middle" fill="#5a4210">E</text>
<text x="121.8" y="429.2" font-size="8.4" fill="#111" textLength="23.1" lengthAdjust="spacingAndGlyphs" >Empty</text>
<text x="109.8" y="443.4" font-size="8.4" fill="#111" textLength="47.1" lengthAdjust="spacingAndGlyphs" >Feeder Color</text>
<rect x="201" y="433" width="10.9" height="11.9" fill="#979ce0" /><path d="M201 441.57 Q204.27 437.17 211.9 436.33 L211.9 433 L201 433 Z" fill="#a9aeea"/>
<text x="214.2" y="443.4" font-size="8.4" fill="#111" textLength="11.1" lengthAdjust="spacingAndGlyphs" >OK</text>
<rect x="293" y="433" width="11.6" height="11.9" fill="#d83049" /><path d="M293 441.57 Q296.48 437.17 304.6 436.33 L304.6 433 L293 433 Z" fill="#e6506a"/>
<text x="306.8" y="443.4" font-size="8.4" fill="#111" textLength="10.7" lengthAdjust="spacingAndGlyphs" >NG</text>
<rect x="386.2" y="433" width="11.2" height="11.9" fill="#c8c8c8" stroke="#b4b4b4" stroke-width="0.5"/><path d="M386.2 441.57 Q389.56 437.17 397.4 436.33 L397.4 433 L386.2 433 Z" fill="#dadada"/>
<text x="399.6" y="443.4" font-size="8.4" fill="#111" textLength="39.6" lengthAdjust="spacingAndGlyphs" >Not loaded</text>
<rect x="463.5" y="453.9" width="9.1" height="9.2" fill="url(#gE)" stroke="#141414" stroke-width="1"/>
<text x="468" y="461.2" font-size="7.6" font-weight="bold" text-anchor="middle" fill="#5a4210">E</text>
<text x="546.9" y="586.6" font-size="9" fill="#111" textLength="42.5" lengthAdjust="spacingAndGlyphs" >Enlarge List</text>
</svg>
<svg class="abs" style="left:724px;top:450px" width="25" height="106" viewBox="0 0 25 106">
<path d="M9.2 8.2 L12.2 5.2 L15.2 8.2 Z" fill="#333"/>
<path d="M9.2 98.2 L15.2 98.2 L12.2 101.2 Z" fill="#333"/>
<rect x="9.6" y="43.4" width="5" height="0.9" fill="#555"/><rect x="9.6" y="45.6" width="5" height="0.9" fill="#555"/><rect x="9.6" y="47.8" width="5" height="0.9" fill="#555"/>
</svg>
<!-- close btn + app icon -->
<div class="abs" style="left:841.2px;top:97px;width:37px;height:14.6px;box-sizing:border-box;border-left:1px solid #e2eaf3;border-bottom:1px solid #e2eaf3;border-radius:0 0 3px 3px;background:#65393f"></div>
<div class="abs" style="left:842.2px;top:97px;width:34.4px;height:13px;border-radius:0 0 2.5px 2.5px;background:linear-gradient(#bb969e,#b88890 40%,#a8636a 55%,#a4666e 75%,#ad7c84)"></div>
<svg class="abs" style="left:856px;top:99px" width="10" height="10" viewBox="0 0 10 10"><path d="M1.3 1.6 L7.9 7.6 M7.9 1.6 L1.3 7.6" stroke="#dcbec4" stroke-width="1.8" fill="none"/></svg>
<div class="abs" style="left:569.5px;top:97px;width:26.5px;height:1.2px;background:#3a3a48;opacity:.8"></div>
<svg class="abs" style="left:92px;top:98px" width="14" height="17" viewBox="0 0 14 17">
<rect x="5.8" y="2.2" width="1.8" height="4" fill="#e8e8e8"/>
<rect x="4.5" y="4.9" width="4.6" height="4.5" rx="1" fill="#35b435"/>
<rect x="5.4" y="9.2" width="2.8" height="1.3" fill="#5a4a6a"/>
<path d="M1.8 14.1 Q3 11.4 5.2 10.4 H8.4 Q10.6 11.4 11.9 14.1 Z" fill="#2fc02f"/>
</svg>
</body></html>
